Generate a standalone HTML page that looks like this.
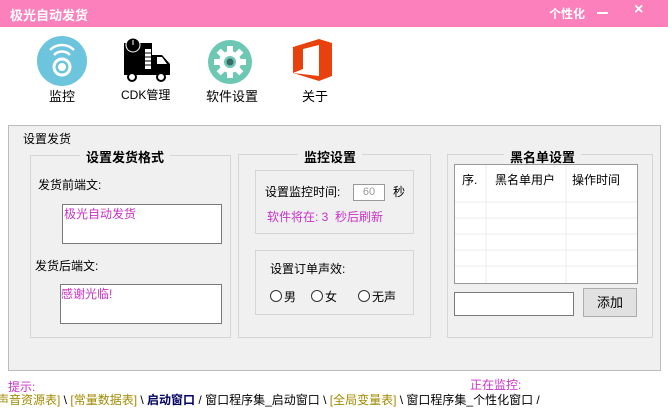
<!DOCTYPE html>
<html><head><meta charset="utf-8"><style>
*{margin:0;padding:0;box-sizing:border-box}
body{width:668px;height:405px;overflow:hidden;background:#fff;font-family:"Liberation Sans","Noto Sans CJK SC","WenQuanYi Zen Hei",sans-serif;font-size:12px;color:#000;position:relative}
.a{position:absolute;white-space:nowrap}
.bar{left:0;top:0;width:668px;height:27px;background:#fc80bb}
.box{position:absolute;border:1px solid #d5d5d5;background:#f0f0f0}
.inp{position:absolute;background:#fff;border:1px solid #7a7a7a}
.t{font-weight:bold;font-size:13px;background:#f0f0f0;padding:0 6px}
.m{color:#c832c8}
.r{position:absolute;width:12px;height:12px;border:1px solid #333;border-radius:50%;background:#fff}
</style></head><body>
<div class="a bar"></div>
<div class="a" style="left:10px;top:5px;color:#fff;font-weight:bold;font-size:13px">极光自动发货</div>
<div class="a" style="left:549px;top:5px;color:#fff;font-size:12px;font-weight:bold">个性化</div>
<div class="a" style="left:597px;top:12px;width:11px;height:2px;background:#fff"></div>
<div class="a" style="left:634px;top:1px;color:#fff;font-size:16px;font-weight:bold">×</div>

<svg class="a" style="left:37px;top:36px" width="52" height="52"><circle cx="25" cy="25" r="25" fill="#6cc4dd"/><circle cx="25" cy="31" r="8" fill="none" stroke="#fff" stroke-width="3"/><circle cx="25" cy="31" r="4" fill="#fff"/><path d="M17 19a11 11 0 0 1 16 0M13 14a17 17 0 0 1 24 0" fill="none" stroke="#fff" stroke-width="2.5"/></svg>
<div class="a" style="left:49px;top:86px;font-size:13px">监控</div>
<svg class="a" style="left:121px;top:37px" width="52" height="46"><rect x="3" y="6" width="28" height="30" fill="#000"/><circle cx="12" cy="8" r="7" fill="#000" stroke="#fff" stroke-width="1"/><path d="M12 3v5" stroke="#fff"/><rect x="24" y="12" width="6" height="20" fill="#fff"/><path d="M24 16h6M24 20h6M24 24h6M24 28h6" stroke="#000"/><path d="M31 18h10l8 9v9H31z" fill="#000"/><path d="M36 20h5l5 7h-10z" fill="#fff"/><rect x="3" y="36" width="46" height="2" fill="#000"/><circle cx="11" cy="40" r="4" fill="#fff" stroke="#000" stroke-width="2"/><circle cx="40" cy="40" r="4" fill="#fff" stroke="#000" stroke-width="2"/></svg>
<div class="a" style="left:121px;top:86px;font-size:12px">CDK管理</div>
<svg class="a" style="left:207px;top:39px" width="46" height="46"><circle cx="23" cy="23" r="22" fill="#6cc7b3"/><g fill="#fff" transform="translate(23 23)"><circle r="11"/><rect x="-3" y="-16" width="6" height="32"/><rect x="-3" y="-16" width="6" height="32" transform="rotate(45)"/><rect x="-3" y="-16" width="6" height="32" transform="rotate(90)"/><rect x="-3" y="-16" width="6" height="32" transform="rotate(135)"/></g><circle cx="23" cy="23" r="6" fill="#6cc7b3"/><circle cx="23" cy="23" r="3.5" fill="#3a6a66"/></svg>
<div class="a" style="left:206px;top:86px;font-size:13px">软件设置</div>
<svg class="a" style="left:291px;top:37px" width="43" height="45"><path d="M2 10L28 2l13 4v33l-13 5L2 36l26 3V8L12 12v20l-10 4z" fill="#e8410e"/></svg>
<div class="a" style="left:302px;top:86px;font-size:13px">关于</div>

<div class="box" style="left:8px;top:125px;width:653px;height:246px;border-color:#bdbdbd"></div>
<div class="a" style="left:23px;top:130px;background:#f0f0f0;padding-right:2px">设置发货</div>

<div class="box" style="left:30px;top:155px;width:201px;height:183px"></div>
<div class="a t" style="left:80px;top:147px">设置发货格式</div>
<div class="a" style="left:38px;top:176px">发货前端文:</div>
<div class="inp" style="left:62px;top:204px;width:160px;height:40px"></div>
<div class="a m" style="left:64px;top:205px">极光自动发货</div>
<div class="a" style="left:35px;top:257px">发货后端文:</div>
<div class="inp" style="left:60px;top:284px;width:162px;height:40px"></div>
<div class="a m" style="left:61px;top:285px">感谢光临!</div>

<div class="box" style="left:238px;top:154px;width:193px;height:184px"></div>
<div class="a t" style="left:298px;top:147px">监控设置</div>
<div class="box" style="left:255px;top:170px;width:159px;height:64px"></div>
<div class="a" style="left:265px;top:183px">设置监控时间:</div>
<div class="inp" style="left:353px;top:184px;width:32px;height:17px;border-color:#999;color:#999;font-size:11px;text-align:center;line-height:15px">60</div>
<div class="a" style="left:393px;top:183px">秒</div>
<div class="a m" style="left:267px;top:208px">软件将在: 3 &nbsp;秒后刷新</div>
<div class="box" style="left:255px;top:250px;width:159px;height:65px"></div>
<div class="a" style="left:270px;top:260px">设置订单声效:</div>
<div class="r" style="left:270px;top:290px"></div><div class="a" style="left:284px;top:288px">男</div>
<div class="r" style="left:311px;top:290px"></div><div class="a" style="left:325px;top:288px">女</div>
<div class="r" style="left:358px;top:290px"></div><div class="a" style="left:372px;top:288px">无声</div>

<div class="box" style="left:447px;top:154px;width:206px;height:184px"></div>
<div class="a t" style="left:504px;top:147px">黑名单设置</div>
<div class="inp" style="left:454px;top:164px;width:184px;height:120px;border-color:#999"></div>
<svg class="a" style="left:455px;top:165px" width="182" height="118"><g stroke="#ececec"><path d="M31 0v118M111 0v118M0 37h182M0 53h182M0 69h182M0 85h182M0 101h182"/></g></svg>
<div class="a" style="left:462px;top:171px">序.</div>
<div class="a" style="left:495px;top:171px">黑名单用户</div>
<div class="a" style="left:572px;top:171px">操作时间</div>
<div class="inp" style="left:454px;top:292px;width:120px;height:24px"></div>
<div class="a" style="left:583px;top:288px;width:54px;height:29px;background:#e1e1e1;border:1px solid #adadad;text-align:center;line-height:27px;font-size:13px">添加</div>

<div class="a m" style="left:8px;top:378px">提示:</div>
<div class="a m" style="left:470px;top:376px">正在监控:</div>
<div class="a" style="left:-3px;top:391px;font-size:12px"><span style="color:#a08a00">声音资源表]</span> \ <span style="color:#a08a00">[常量数据表]</span> \ <b style="color:#000060">启动窗口</b> / 窗口程序集_启动窗口 \ <span style="color:#a08a00">[全局变量表]</span> \ 窗口程序集_个性化窗口 /</div>
</body></html>
